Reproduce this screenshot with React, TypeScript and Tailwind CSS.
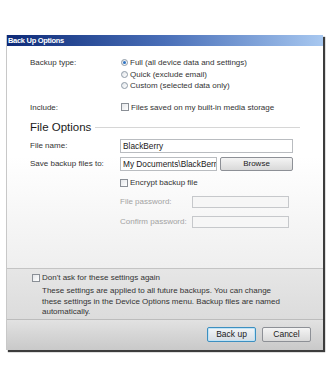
import React from "react";

const font = { fontFamily: '"Liberation Sans", Arial, sans-serif' };

function Radio({ checked }: { checked?: boolean }) {
  return (
    <span className="w-[7px] h-[7px] rounded-full border border-[#8e9aa6] bg-gradient-to-br from-[#dfe3e8] to-[#ffffff] flex items-center justify-center shrink-0">
      {checked && <span className="w-[3px] h-[3px] rounded-full bg-[#2d73c4]" />}
    </span>
  );
}

function Check() {
  return <span className="w-[8px] h-[8px] border border-[#8a8f96] bg-gradient-to-br from-[#e4e6e9] to-white shrink-0" />;
}

export default function App() {
  return (
    <div className="w-[330px] h-[385px] bg-white pt-[35px] pl-[6px] text-[8px] text-[#333333]" style={font}>
      <div className="w-[317px] h-[315px] flex flex-col border-l border-[#c8c8c8] shadow-[2px_2px_1px_#3c3c3c]">
        {/* Title bar */}
        <div className="h-[11px] bg-gradient-to-r from-[#0e2a78] via-[#4a6fb8] to-[#a8c8f0] flex items-center pl-[1px]">
          <span className="text-white font-bold text-[7.5px] tracking-[-0.3px] leading-none">Back Up Options</span>
        </div>

        {/* Main body */}
        <div className="h-[222px] bg-gradient-to-b from-white via-white to-[#efefef] pl-[23px] pt-[11px] flex flex-col">
          <div className="flex">
            <div className="w-[91px] leading-[11.5px]">Backup type:</div>
            <div className="flex flex-col">
              <div className="flex items-center gap-[2px] leading-[11.5px]"><Radio checked /><span>Full (all device data and settings)</span></div>
              <div className="flex items-center gap-[2px] leading-[11.5px]"><Radio /><span>Quick (exclude email)</span></div>
              <div className="flex items-center gap-[2px] leading-[11.5px]"><Radio /><span>Custom (selected data only)</span></div>
            </div>
          </div>
          <div className="flex mt-[10px] leading-[11.5px]">
            <div className="w-[91px]">Include:</div>
            <div className="flex items-center gap-[2px]"><Check /><span>Files saved on my built-in media storage</span></div>
          </div>
          <div className="flex items-center mt-[7px] h-[14px]">
            <span className="text-[11.5px] leading-[14px] text-[#1a1a1a]">File Options</span>
            <span className="ml-[4px] w-[205px] h-px bg-[#d6d6d6]" />
          </div>
          <div className="flex items-center mt-[5px]">
            <div className="w-[90px]">File name:</div>
            <div className="w-[173px] h-[14px] border border-[#b9bcc0] bg-white flex items-center pl-[2px] text-[8.3px] text-[#1a1a1a]">BlackBerry</div>
          </div>
          <div className="flex items-center mt-[4px]">
            <div className="w-[90px]">Save backup files to:</div>
            <div className="w-[97px] h-[14px] border border-[#b9bcc0] bg-white flex items-center pl-[2px] text-[8.3px] text-[#1a1a1a] overflow-hidden whitespace-nowrap">My Documents\BlackBerry</div>
            <div className="ml-[3px] w-[73px] h-[14px] rounded-[2px] border border-[#8d9096] bg-gradient-to-b from-[#f4f4f4] to-[#d9d9d9] flex items-center justify-center text-[#1a1a1a]">Browse</div>
          </div>
          <div className="flex items-center gap-[2px] mt-[6px] ml-[90px] h-[12px]">
            <Check /><span>Encrypt backup file</span>
          </div>
          <div className="flex items-center mt-[7px] ml-[90px] text-[#a3a3a3]">
            <div className="w-[72px]">File password:</div>
            <div className="w-[97px] h-[12px] border border-[#c6c8cb] bg-[#f6f6f6]" />
          </div>
          <div className="flex items-center mt-[8px] ml-[90px] text-[#a3a3a3]">
            <div className="w-[72px]">Confirm password:</div>
            <div className="w-[97px] h-[12px] border border-[#c6c8cb] bg-[#f6f6f6]" />
          </div>
        </div>

        {/* Middle section */}
        <div className="h-[51px] border-t border-[#c4c4c4] bg-gradient-to-b from-[#e6e6e6] to-[#dcdcdc] pl-[25px] pt-[3px] flex flex-col">
          <div className="flex items-center gap-[2px] h-[12px]"><Check /><span>Don't ask for these settings again</span></div>
          <div className="ml-[10px] mt-[2px] leading-[10.5px]">
            These settings are applied to all future backups. You can change<br />
            these settings in the Device Options menu. Backup files are named<br />
            automatically.
          </div>
        </div>

        {/* Footer */}
        <div className="flex-1 border-t border-[#bcbcbc] bg-gradient-to-b from-[#e2e2e2] to-[#c9c9c9] flex items-center justify-end pr-[12px] gap-[6px] pb-[1px]">
          <div className="w-[49px] h-[15px] rounded-[2px] border border-[#3d8fc0] bg-gradient-to-b from-[#f2f5f8] to-[#d6dde4] flex items-center justify-center text-[8.5px] text-[#1a1a1a] shadow-[inset_0_0_0_1px_#bfe3f6]">Back up</div>
          <div className="w-[49px] h-[15px] rounded-[2px] border border-[#8d9096] bg-gradient-to-b from-[#f4f4f4] to-[#d9d9d9] flex items-center justify-center text-[8.5px] text-[#1a1a1a]">Cancel</div>
        </div>
      </div>
    </div>
  );
}
